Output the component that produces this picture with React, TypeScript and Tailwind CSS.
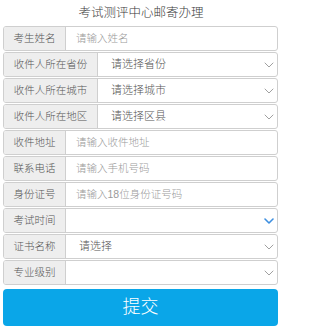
import React from 'react';

type Row = {
    label: string;
    text?: string;
    kind: 'input' | 'select';
    wide?: boolean;
    blue?: boolean;
};

const rows: Row[] = [
    {label: '考生姓名', text: '请输入姓名', kind: 'input'},
    {label: '收件人所在省份', text: '请选择省份', kind: 'select', wide: true},
    {label: '收件人所在城市', text: '请选择城市', kind: 'select', wide: true},
    {label: '收件人所在地区', text: '请选择区县', kind: 'select', wide: true},
    {label: '收件地址', text: '请输入收件地址', kind: 'input'},
    {label: '联系电话', text: '请输入手机号码', kind: 'input'},
    {label: '身份证号', text: '请输入18位身份证号码', kind: 'input'},
    {label: '考试时间', kind: 'select', blue: true},
    {label: '证书名称', text: '请选择', kind: 'select'},
    {label: '专业级别', kind: 'select'},
];

function Chevron({blue}: {blue?: boolean}) {
    return (
        <svg width="10" height="6" viewBox="0 0 10 6" className="shrink-0">
            <path d="M1 1 L5 5 L9 1" fill="none" stroke={blue ? '#3d8fe0' : '#a0a0a0'}
                  strokeWidth={blue ? 1.6 : 1} strokeLinecap="round" strokeLinejoin="round"/>
        </svg>
    );
}

function FormRow({row}: {row: Row}) {
    return (
        <div className="flex h-[25px] mb-[1px] border border-[#cfcfcf] rounded-[3px] overflow-hidden bg-white">
            <div className={(row.wide ? 'w-[94px]' : 'w-[62px]') + ' shrink-0 flex items-center justify-center bg-[#eeeeee] border-r border-[#cfcfcf] text-[10.5px] text-[#555555]'}>
                {row.label}
            </div>
            {row.kind === 'input' ? (
                <div className="flex-1 flex items-center pl-[10px] text-[10.5px] text-[#9a9a9a]">
                    {row.text}
                </div>
            ) : (
                <div className="flex-1 flex items-center pl-[13px] pr-[3px] text-[11px] text-[#555555]">
                    <span className="flex-1">{row.text}</span>
                    <Chevron blue={row.blue}/>
                </div>
            )}
        </div>
    );
}

function App() {
    return (
        <div className="w-[284px] h-[333px] bg-white pl-[3px] pr-[6px] font-light"
             style={{fontFamily: '"Liberation Sans", "Noto Sans CJK SC", sans-serif'}}>
            <div className="h-[26px] flex items-center justify-center text-[12.5px] text-[#3a3a3a] pl-[1px] pt-[1px]">
                考试测评中心邮寄办理
            </div>
            {rows.map((row) => (
                <FormRow key={row.label} row={row}/>
            ))}
            <button className="mt-[4px] w-full h-[37px] rounded-[4px] bg-[#0aa6e8] text-white text-[18px] font-light flex items-center justify-center">
                提交
            </button>
        </div>
    );
}

export default App;
